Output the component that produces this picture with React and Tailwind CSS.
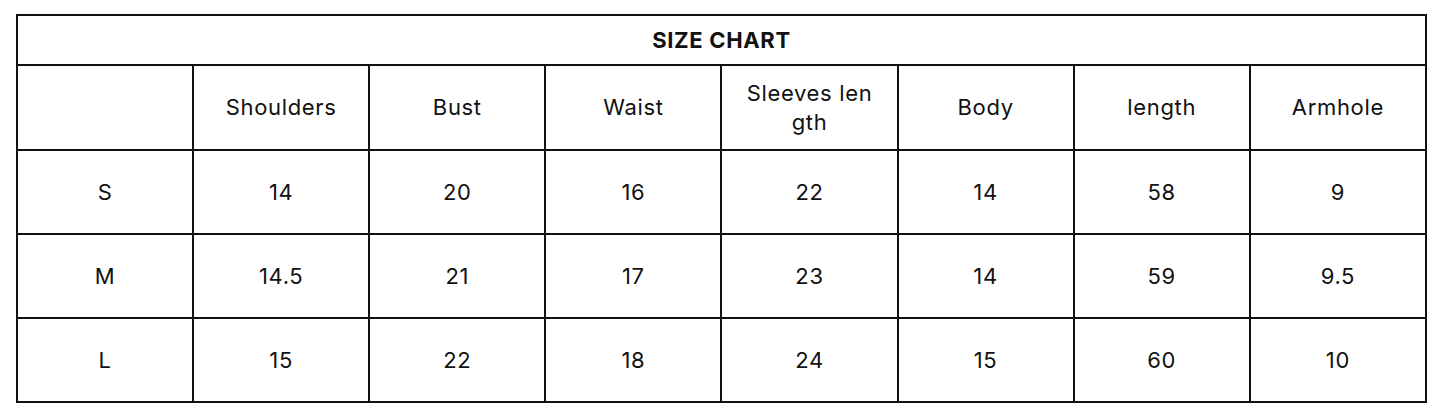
export default function App() {
  const cols = ["Shoulders", "Bust", "Waist", "Sleeves len gth", "Body", "length", "Armhole"];
  const rows = [
    ["S", "14", "20", "16", "22", "14", "58", "9"],
    ["M", "14.5", "21", "17", "23", "14", "59", "9.5"],
    ["L", "15", "22", "18", "24", "15", "60", "10"],
  ];
  const cell = "border-2 border-[#111] text-center align-middle";
  return (
    <div className="w-[1445px] h-[411px] bg-white pt-[14px] pl-[16px] text-[#111]" style={{ fontFamily: "Inter, 'Open Sans', sans-serif" }}>
      <table className="table-fixed border-collapse w-[1411px] text-[22px] tracking-[0.03em]">
        <colgroup>
          {Array.from({ length: 8 }).map((_, i) => (
            <col key={i} className="w-[176px]" />
          ))}
        </colgroup>
        <tbody>
          <tr className="h-[50px]">
            <td colSpan={8} className={cell + " font-bold"}>SIZE CHART</td>
          </tr>
          <tr className="h-[85px]">
            <td className={cell}></td>
            {cols.map((c) => (
              <td key={c} className={cell + " leading-[29px] px-[16px]"}>{c}</td>
            ))}
          </tr>
          {rows.map((r, ri) => (
            <tr key={ri} className="h-[84px]">
              {r.map((v, i) => (
                <td key={i} className={cell}>{v}</td>
              ))}
            </tr>
          ))}
        </tbody>
      </table>
    </div>
  );
}
